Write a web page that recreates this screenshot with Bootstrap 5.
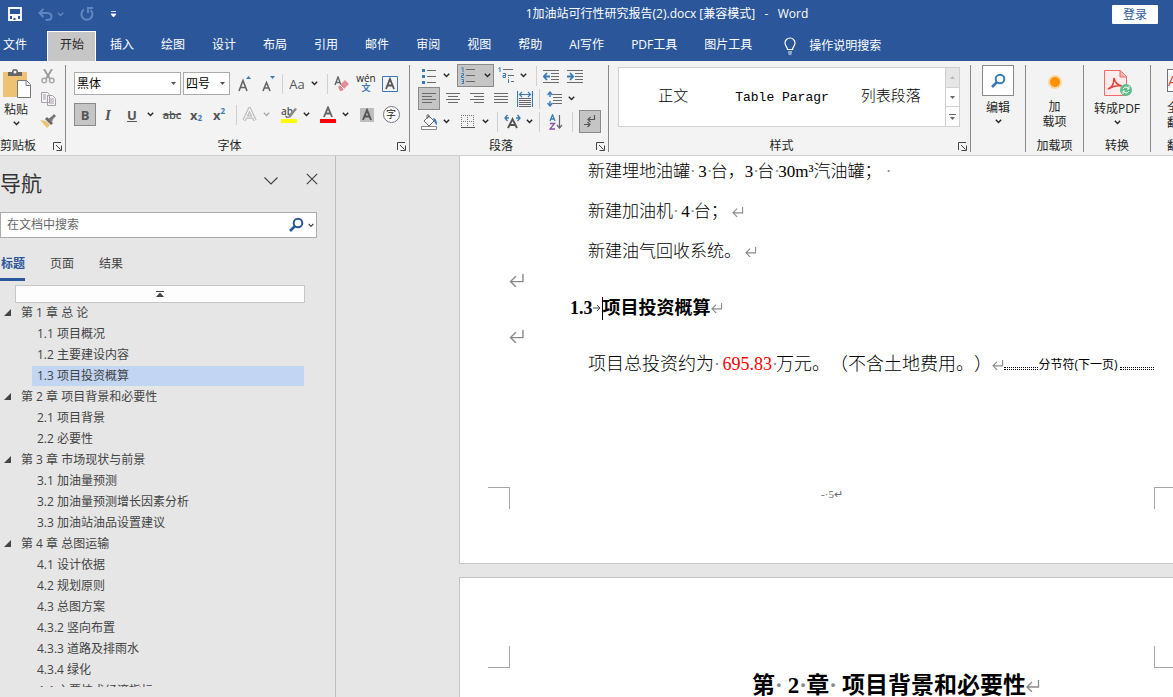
<!DOCTYPE html>
<html lang="zh-CN">
<head>
<meta charset="utf-8">
<meta name="viewport" content="width=device-width, initial-scale=1">
<title>1加油站可行性研究报告(2).docx - Word</title>
<link href="https://cdn.jsdelivr.net/npm/bootstrap@5.3.0/dist/css/bootstrap.min.css" rel="stylesheet">
<script src="https://cdn.jsdelivr.net/npm/bootstrap@5.3.0/dist/js/bootstrap.bundle.min.js"></script>
<style>
:root{--blue:#2b579a;--line:#c6c6c6;--ink:#262626;--ico:#6a6a6a;--accent:#3c7ab5}
body{font:12px/18px "Open Sans","Noto Sans CJK SC",sans-serif;color:var(--ink);background:#e6e6e6}
button{font:inherit;color:inherit;background:none;border:0;padding:0}
a{color:inherit;text-decoration:none}
svg{display:block;flex:none}
.titlebar{display:grid;grid-template-columns:1fr auto 1fr;height:28px;padding-right:15px;align-items:center}
.titlebar .doc-name{padding-left:176px;white-space:pre}
.app-head{background:var(--blue);color:#fff}
.login{background:#fff;color:var(--blue);width:46px;height:19px;line-height:17px;border-radius:1px}
.quick{gap:16px;padding-left:8px}
.quick .dim{color:#5f86c0}
.tabs{height:33px;padding-top:3px;gap:1px}
.tabs a{padding:0 13px;line-height:28px;height:30px;white-space:nowrap}
.tabs a.file{padding-left:3px;margin-right:6px}
.tabs a.on{background:#c6c6c6;color:var(--ink);border:1px solid #fff;border-bottom:0;padding:0 11px 0 12px;line-height:26px}
.tabs a.tell{gap:11px}
.ribbon{background:#f3f3f3;border-bottom:1px solid #d0d0d0;height:95px;padding:4px 0 3px}
.group{position:relative;flex:none;border-right:1px solid #8a8a8a;display:flex;flex-direction:column}
.group-label{margin-top:auto;line-height:13px;text-align:center;white-space:nowrap}
.launcher{position:absolute;right:3px;bottom:1px}
.tools{display:grid;height:23px;align-items:center;justify-items:center}
.tools button{display:flex;align-items:center;justify-content:center;width:100%;height:100%}
.tools .on{background:#c5c5c5;border:1px solid #8a8a8a}
.sep{width:1px;height:20px;background:#d0d0d0}
.ribbon .form-select{font-size:12px;line-height:18px;border:1px solid #ababab;border-radius:0;padding:0 12px 0 2px;height:23px;color:#000;background:#fff url("data:image/svg+xml,%3Csvg xmlns='http://www.w3.org/2000/svg' width='7' height='4'%3E%3Cpath d='M1 0h5L3.500 3z' fill='%23555'/%3E%3C/svg%3E") no-repeat right 3px center;background-size:7px 4px}
.clip{width:66px}
.fnt{width:344px;padding:7px 0 0 8px}
.font-a{grid-template-columns:107px 2px 47px 2px 24px 24px 5px 24px 10px 6px 5px 24px 24px 24px}
.font-b{grid-template-columns:22px 24px 24px 12px 32px 16px 30px 4px 22px 12px 5px 24px 10px 5px 24px 10px 5px 24px 24px;margin-top:8px}
.para{width:199px;padding-left:8px}
.para-a{grid-template-columns:23px 10px 6px 37px 24px 10px 6px 5px 24px 24px;margin-top:-1px}
.para-b{grid-template-columns:22px 25px 24px 24px 24px 5px 24px 10px}
.para-c{grid-template-columns:23px 10px 5px 24px 10px 5px 5px 24px 10px 10px 24px 8px 3px 22px}
.glyph{font-weight:700;font-size:13px;color:#555;line-height:20px}
.glyph em{font:italic 700 15px/20px "Liberation Serif",serif}
.glyph s{font-size:11px;font-weight:600}
.glyph small{font-size:8px;line-height:8px;color:#3c7ab5}
.pinyin span{font-size:10px;line-height:9px}
.pinyin b{font-size:9px;line-height:10px;color:#3c7ab5}
.ringed{width:17px;height:17px;font-size:10px;line-height:14px}
.gallery{margin:2px 10px 0 9px;height:60px;border:1px solid #d0d0d0;background:#fff;font:15px/20px "Liberation Mono","Noto Sans CJK SC",monospace;color:#000;font-weight:300}
.gallery .sample{flex:1 1 0;white-space:nowrap;padding-top:2px}
.gallery .latin{font-size:13px}
.gallery .scroller{width:14px;border-left:1px solid #d0d0d0}
.scroller button{flex:1;display:flex;align-items:center;justify-content:center;border-bottom:1px solid #d0d0d0}
.scroller button:first-child{background:#e6e6e6}
.scroller button:last-child{border:0}
.big{display:flex;flex-direction:column;align-items:center;white-space:nowrap;line-height:15px}
.lens{width:32px;height:31px;border:1px solid #8a8a8a;background:#fff;margin-bottom:4px;color:#3c7ab5}
.trans{color:#e5443f;height:23px;line-height:20px;font-size:15px}
.pane{width:336px;flex:none;border-right:1px solid #bdbdbd;color:#444;padding-bottom:10px}
.pane h1{font-size:21px;line-height:28px;margin:0;color:#333;font-weight:400}
.pane-head{padding:13px 17px 0 0;height:56px}
.searchbox{width:317px;height:26px;background:#fff;border:1px solid #ababab;padding-right:2px}
.searchbox input{font-size:12px;border:0;padding:0 6px 2px;height:24px;background:none;box-shadow:none}
.searchbox input::placeholder{color:#666}
.views{gap:25px;padding-top:16px}
.views a{line-height:20px;padding-bottom:4px;border-bottom:3px solid transparent}
.views a.on{color:var(--blue);font-weight:700;border-color:var(--blue);padding-left:1px}
.collapse-bar{margin:4px 30px 0 15px;height:18px;background:#fdfdfd;border:1px solid var(--line);flex:none}
.outline{list-style:none;margin:0 31px 0 0;padding:0;flex:1 1 0;overflow:hidden;white-space:nowrap}
.outline li{display:flex;align-items:flex-start;height:21px;padding-left:4px}
.outline a{line-height:19px;height:20px}
.outline li button{width:17px;padding-top:6px}
.outline .sub{padding-left:32px}
.outline .sub a{padding-left:5px;flex:1}
.outline .sub a.on{background:#c2d5f2}
.desk{flex:1;min-width:0;overflow:hidden;padding-left:123px;gap:13px}
.sheet{background:#fff;border:1px solid var(--line);border-right:0;border-top:0;flex:none;color:#000;font:17px/29px "Liberation Serif","Noto Sans CJK SC",serif;font-weight:300;white-space:nowrap;padding-top:1px;text-spacing-trim:space-all}
.sheet.next{border-top:1px solid var(--line);padding-top:68px}
.sheet p{margin:0 0 11px;padding:0 19px 0 128px;display:flex;align-items:center}
.sheet p.tight{margin:0}
.sheet p.total{font-size:18px}
.sheet i{font-style:normal;color:#8a8a8a;width:4px;text-align:center}
.sheet .alone{height:28px;padding-left:49px;display:flex;align-items:center}
.sheet h2{font-size:18px;line-height:28px;font-weight:700;margin:0;padding-left:110px;display:flex;align-items:center}
.sheet h3{font-size:23px;line-height:36px;font-weight:700;margin:0;padding-left:292px;display:flex;align-items:center}
.sheet h3 i{width:7px}
.caret{width:1px;height:23px;background:#000}
.brk{flex:1;height:3px;border:dotted #000;border-width:1px 0}
.brk-name{font:12px/20px "Open Sans","Noto Sans CJK SC",sans-serif;padding-right:2px}
.crop{--bs-border-color:#a6a6a6;width:22px;height:22px}
.crop.edge{width:19px}
.crops{padding-left:28px}
.crops.foot{margin-top:108px;padding-bottom:54px}
.folio{font-size:11px;line-height:14px;color:#666}
</style>
</head>
<body class="vh-100 overflow-hidden d-flex flex-column">
<svg width="0" height="0" class="position-absolute" aria-hidden="true">
<symbol id="chev" viewBox="0 0 7 5"><path d="M.8.8 3.500 3.500 6.200.8" fill="none" stroke="currentColor" stroke-width="1.400"/></symbol>
<symbol id="launch" viewBox="0 0 9 9"><path d="M.5 8V.5H8M3 3l4.500 4.500M8.500 3.500v5h-5" fill="none" stroke="#444"/></symbol>
<symbol id="ret" viewBox="0 0 14 12"><path d="M12.500 0v7H1.500M6 2 1 7l5 5" fill="none" stroke="#8a8a8a" stroke-width="1.300"/></symbol>
<symbol id="lensicon" viewBox="0 0 16 16"><circle cx="10" cy="6" r="4.300" fill="none" stroke="currentColor" stroke-width="2"/><path d="M7 9 2 14" stroke="currentColor" stroke-width="2.600"/></symbol>
</svg>

<header class="app-head flex-shrink-0">
<div class="titlebar">
  <div class="quick d-flex align-items-center">
    <button aria-label="保存"><svg width="14" height="14" viewBox="0 0 14 14"><path d="M1 1h12v12H1zM1 8h12" fill="none" stroke="#fff" stroke-width="1.800"/><path d="M4 9h6v5H4z" fill="#fff"/><path d="M5.500 11h2v2h-2z" fill="#2b579a"/></svg></button>
    <button class="dim d-flex align-items-center gap-1" aria-label="撤消"><svg width="15" height="13" viewBox="0 0 15 13"><path d="M5.500 1 1.500 5l4 4M2 5h7q4.500 0 4.500 3.500T9 12H7.500" fill="none" stroke="currentColor" stroke-width="2"/></svg><svg width="7" height="5"><use href="#chev"/></svg></button>
    <button class="dim" aria-label="恢复"><svg width="14" height="14" viewBox="0 0 14 14"><path d="M4 2.500A5.500 5.500 0 1 0 10.500 3M8 6V1h5" fill="none" stroke="currentColor" stroke-width="2"/></svg></button>
    <button aria-label="自定义快速访问工具栏"><svg width="7" height="7"><path d="M1 .5h5M1 3h5L3.500 6z" fill="#fff" stroke="#fff" stroke-width=".8"/></svg></button>
  </div>
  <div class="doc-name">1加油站可行性研究报告(2).docx [兼容模式]   -   Word</div>
  <button class="login ms-auto">登录</button>
</div>
<nav class="tabs d-flex">
  <a class="file" href="#">文件</a><a class="on" href="#">开始</a><a href="#">插入</a><a href="#">绘图</a><a href="#">设计</a><a href="#">布局</a><a href="#">引用</a><a href="#">邮件</a><a href="#">审阅</a><a href="#">视图</a><a href="#">帮助</a><a href="#">AI写作</a><a href="#">PDF工具</a><a href="#">图片工具</a>
  <a class="tell d-flex align-items-center ps-3" href="#"><svg width="16" height="18" viewBox="0 0 16 18"><path d="M5.500 12.500C5.500 10 3 9 3 6a5 5 0 0 1 10 0c0 3-2.500 4-2.500 6.500zM6 15h4M6.500 17h3" fill="none" stroke="#fff" stroke-width="1.200"/></svg>操作说明搜索</a>
</nav>
</header>

<div class="ribbon d-flex flex-shrink-0 overflow-hidden">
  <section class="group clip">
    <div class="d-flex">
      <button class="big"><svg width="32" height="33" viewBox="0 0 32 33"><path d="M3 7h24v25H3z" fill="#eec274"/><path d="M8 11V7h4q0-3 3-3t3 3h4v4z" fill="#666"/><circle cx="15" cy="7" r="1.500" fill="#f3f3f3"/><path d="M17.500 15.500h9l4 4v13h-13z" fill="#fff" stroke="#777"/><path d="M26 15.500v5h5" fill="none" stroke="#777"/></svg><span class="pt-1">粘贴</span><svg width="7" height="5" class="mt-1"><use href="#chev"/></svg></button>
      <div class="d-flex flex-column align-items-center ps-2 pt-1 gap-2">
        <button aria-label="剪切"><svg width="14" height="15" viewBox="0 0 14 15"><path d="M3 0l6 10M11 0 5 10" stroke="#999" stroke-width="1.800"/><circle cx="3.200" cy="11.500" r="2.300" fill="none" stroke="#aaa" stroke-width="1.500"/><circle cx="10.800" cy="11.500" r="2.300" fill="none" stroke="#aaa" stroke-width="1.500"/></svg></button>
        <button aria-label="复制"><svg width="15" height="14" viewBox="0 0 15 14"><path d="M.5.500h6l2 2v8h-8zM6.500 3.500h5l3 3v7h-8z" fill="#f3f3f3" stroke="#a89fad"/><path d="M2 3h3M2 5h3M2 7h3M8 7h5M8 9h5M8 11h5" stroke="#a89fad"/></svg></button>
        <button aria-label="格式刷"><svg width="16" height="14" viewBox="0 0 16 14"><path d="M0 6l6 1 4 4-3 3z" fill="#eec274"/><path d="M5 5l2-2 6 6-2 2z" fill="#666"/><path d="M8 5l3-2 3-3 2 2-3 3-1 3z" fill="#777"/></svg></button>
      </div>
    </div>
    <div class="group-label text-start">剪贴板</div><button class="launcher" aria-label="剪贴板选项"><svg width="9" height="9"><use href="#launch"/></svg></button>
  </section>

  <section class="group fnt">
    <div class="tools font-a">
      <select class="form-select" aria-label="字体"><option>黑体</option></select><span></span>
      <select class="form-select" aria-label="字号"><option>四号</option></select><span></span>
      <button aria-label="增大字号"><svg width="15" height="18" viewBox="0 0 15 18"><path d="M2 16 6 5.500 10 16M3.500 12.500h5" fill="none" stroke="#666" stroke-width="1.600"/><path d="M9 4l2.500-3L14 4z" fill="#3c7ab5"/></svg></button>
      <button aria-label="减小字号"><svg width="15" height="18" viewBox="0 0 15 18"><path d="M2 16 5.500 7.500 9 16M3 13h5" fill="none" stroke="#666" stroke-width="1.600"/><path d="M9 1h5l-2.500 3z" fill="#3c7ab5"/></svg></button>
      <span class="sep"></span><button class="glyph fw-normal">Aa</button><svg width="7" height="5"><use href="#chev"/></svg><span></span><span class="sep"></span>
      <button aria-label="清除格式"><svg width="16" height="16" viewBox="0 0 16 16"><path d="M1 9 4 1l3 8M2 6.500h4" fill="none" stroke="#666" stroke-width="1.400"/><path d="M4 11 11 4l4 4-7 7H6z" fill="#e88b97"/><path d="M6 9l4 4" stroke="#fff"/></svg></button>
      <button aria-label="拼音指南" class="pinyin flex-column"><span>wén</span><b>文</b></button>
      <button aria-label="字符边框"><svg width="16" height="16" viewBox="0 0 16 16"><path d="M.5.500h15v15H.5z" fill="none" stroke="#3c7ab5"/><path d="M4 13 8 3l4 10M5.500 9.500h5" fill="none" stroke="#555" stroke-width="1.800"/></svg></button>
    </div>
    <div class="tools font-b">
      <button class="glyph on" aria-label="加粗">B</button>
      <button class="glyph" aria-label="倾斜"><em>I</em></button>
      <button class="glyph" aria-label="下划线"><u>U</u></button><svg width="7" height="5"><use href="#chev"/></svg>
      <button class="glyph" aria-label="删除线"><s>abc</s></button>
      <button aria-label="下标" class="glyph">x<small class="align-self-end pb-1">2</small></button>
      <button aria-label="上标" class="glyph">x<small class="align-self-start pt-1">2</small></button>
      <span class="sep"></span>
      <button aria-label="文本效果"><svg width="15" height="15" viewBox="0 0 15 15"><path d="M2 13.500 7.500 2 13 13.500M4 10h7" fill="none" stroke="#bbb" stroke-width="3.600"/><path d="M2 13.500 7.500 2 13 13.500M4 10h7" fill="none" stroke="#f6f6f6" stroke-width="1.200"/></svg></button>
      <svg width="7" height="5" color="#aaa"><use href="#chev"/></svg><span></span>
      <button aria-label="突出显示"><svg width="17" height="17" viewBox="0 0 17 17"><text x="0" y="9" font-size="10" font-weight="600" fill="#555">ab</text><path d="M7 10 14 2l2 1-7 9z" fill="#888"/><path d="M4 9l5 3H5z" fill="#777"/><path d="M0 13h16v4H0z" fill="#ff0"/></svg></button>
      <svg width="7" height="5"><use href="#chev"/></svg><span></span>
      <button aria-label="字体颜色"><svg width="16" height="17" viewBox="0 0 16 17"><path d="M4 11 8 1.500 12 11M5.500 7.500h5" fill="none" stroke="#666" stroke-width="1.900"/><path d="M0 13h16v4H0z" fill="red"/></svg></button>
      <svg width="7" height="5"><use href="#chev"/></svg><span></span>
      <button aria-label="字符底纹"><svg width="14" height="14" viewBox="0 0 14 14"><path d="M0 0h14v14H0z" fill="#bdbdbd"/><path d="M3 12 7 2l4 10M4.500 8.500h5" fill="none" stroke="#555" stroke-width="1.900"/></svg></button>
      <button aria-label="带圈字符"><span class="ringed rounded-circle border border-secondary bg-white">字</span></button>
    </div>
    <div class="group-label pe-4">字体</div><button class="launcher" aria-label="字体选项"><svg width="9" height="9"><use href="#launch"/></svg></button>
  </section>

  <section class="group para">
    <div class="tools para-a">
      <button aria-label="项目符号"><svg width="15" height="16" viewBox="0 0 15 16"><path d="M5 2.500h9M5 8.500h9M5 14.500h9" stroke="#6a6a6a"/><path d="M0 1h3v3H0zM0 7h3v3H0zM0 13h3v3H0z" fill="#3c7ab5"/></svg></button>
      <svg width="7" height="5"><use href="#chev"/></svg><span></span>
      <button class="on gap-2" aria-label="编号"><svg width="15" height="17" viewBox="0 0 15 17"><path d="M5 2.500h9M5 8.500h9M5 14.500h9" stroke="#6a6a6a"/><path d="M.5 1.500 2 .5V5M.5 6.500h2v2h-2v2h2.500M.5 12.500h2v4h-2M1 14.500h1.500" fill="none" stroke="#3c7ab5"/></svg><svg width="7" height="5"><use href="#chev"/></svg></button>
      <button aria-label="多级列表"><svg width="16" height="17" viewBox="0 0 16 17"><path d="M5 2.500h10M10 8.500h6M13 14.500h3" stroke="#6a6a6a"/><path d="M.5 1.500 2 .5V5M5 6.500h2.500v4H5v-2h2.500M10.500 12v4M10.500 10v1" fill="none" stroke="#3c7ab5"/></svg></button>
      <svg width="7" height="5"><use href="#chev"/></svg><span></span><span class="sep"></span>
      <button aria-label="减少缩进"><svg width="16" height="14" viewBox="0 0 16 14"><path d="M0 1.500h16M8 4.500h8M8 7.500h8M8 10.500h8M0 13.500h16" stroke="#6a6a6a"/><path d="M7 7.500H1M4 4 .8 7.500 4 11" fill="none" stroke="#3c7ab5" stroke-width="1.800"/></svg></button>
      <button aria-label="增加缩进"><svg width="16" height="14" viewBox="0 0 16 14"><path d="M0 1.500h16M8 4.500h8M8 7.500h8M8 10.500h8M0 13.500h16" stroke="#6a6a6a"/><path d="M0 7.500h6M3 4l3.200 3.500L3 11" fill="none" stroke="#3c7ab5" stroke-width="1.800"/></svg></button>
    </div>
    <div class="tools para-b">
      <button class="on" aria-label="左对齐"><svg width="14" height="11"><path d="M0 .5h14M0 3.500h10M0 6.500h14M0 9.500h10" stroke="#6a6a6a"/></svg></button>
      <button aria-label="居中"><svg width="14" height="11"><path d="M0 .5h14M2 3.500h10M0 6.500h14M2 9.500h10" stroke="#6a6a6a"/></svg></button>
      <button aria-label="右对齐"><svg width="14" height="11"><path d="M0 .5h14M4 3.500h10M0 6.500h14M4 9.500h10" stroke="#6a6a6a"/></svg></button>
      <button aria-label="两端对齐"><svg width="14" height="11"><path d="M0 .5h14M0 3.500h14M0 6.500h14M0 9.500h14" stroke="#6a6a6a"/></svg></button>
      <button aria-label="分散对齐"><svg width="16" height="16" viewBox="0 0 16 16"><path d="M.5 0v16M15.500 0v16M3 3.500h10M5 1 2.500 3.500 5 6M11 1l2.500 2.500L11 6" fill="none" stroke="#3c7ab5" stroke-width="1.200"/><path d="M2 7.500h12M2 9.500h12M2 11.500h12M2 13.500h12M2 15.500h12" stroke="#666"/></svg></button>
      <span class="sep"></span>
      <button aria-label="行距"><svg width="15" height="16" viewBox="0 0 15 16"><path d="M6 3.500h9M6 6.500h9M6 9.500h9M6 12.500h9" stroke="#6a6a6a"/><path d="M3 1v5M3 10v5M.5 4 3 1l2.500 3M.5 12 3 15l2.500-3" fill="none" stroke="#3c7ab5" stroke-width="1.400"/></svg></button>
      <svg width="7" height="5"><use href="#chev"/></svg>
    </div>
    <div class="tools para-c">
      <button aria-label="底纹"><svg width="17" height="16" viewBox="0 0 17 16"><path d="M3 7 8 2l5 5-5 5zM6 5V1h2v3" fill="#fff" stroke="#666"/><path d="M12 4q4 0 4 7-2-1-3-4z" fill="#3c7ab5"/><path d="M.5 12.500h15v3H.5z" fill="#fff" stroke="#888"/></svg></button>
      <svg width="7" height="5"><use href="#chev"/></svg><span></span>
      <button aria-label="边框"><svg width="14" height="14"><path d="M0 .5h14M0 6.500h14M.5 0v14M6.500 0v14M12.500 0v14" stroke="#777" stroke-dasharray="1 1"/><path d="M0 12.500h14" stroke="#555"/></svg></button>
      <svg width="7" height="5"><use href="#chev"/></svg><span></span><span class="sep"></span>
      <button aria-label="中文版式"><svg width="17" height="15" viewBox="0 0 17 15"><path d="M4 14 8.500 5 13 14M6 11h5" fill="none" stroke="#555" stroke-width="1.900"/><path d="M1 4h4M3.500 1 1 4l2.500 3M12 4h4M13.500 1 16 4l-2.500 3" fill="none" stroke="#3c7ab5" stroke-width="1.400"/></svg></button>
      <svg width="7" height="5"><use href="#chev"/></svg><span class="sep"></span>
      <button aria-label="排序"><svg width="14" height="16" viewBox="0 0 14 16"><path d="M1 7 3.500.8 6 7M2 5h3" fill="none" stroke="#3c7ab5" stroke-width="1.300"/><path d="M1 9.500h4.500L1 15h5" fill="none" stroke="#8a53a8" stroke-width="1.300"/><path d="M10.500 1v13M8 11l2.500 3 2.500-3" fill="none" stroke="#666" stroke-width="1.200"/></svg></button>
      <span class="sep"></span><span></span>
      <button class="on" aria-label="显示编辑标记"><svg width="12" height="13" viewBox="0 0 12 13"><path d="M10.500 0v4.500H4M6.500 2 4 4.500 6.500 7M0 9.500h6M3.500 7 6 9.500 3.500 12" fill="none" stroke="#555" stroke-width="1.200"/></svg></button>
    </div>
    <div class="group-label pe-4">段落</div><button class="launcher" aria-label="段落选项"><svg width="9" height="9"><use href="#launch"/></svg></button>
  </section>

  <section class="group flex-grow-1 flex-shrink-1">
    <div class="gallery d-flex">
      <div class="d-flex flex-grow-1 align-items-center"><button class="sample">正文</button><button class="sample latin">Table Paragr</button><button class="sample">列表段落</button></div>
      <div class="scroller d-flex flex-column">
        <button aria-label="上一行"><svg width="5" height="3"><path d="M0 3h5L2.500 0z" fill="#bbb"/></svg></button>
        <button aria-label="下一行"><svg width="5" height="3"><path d="M0 0h5L2.500 3z" fill="#666"/></svg></button>
        <button aria-label="其他"><svg width="7" height="6"><path d="M0 .5h7" stroke="#666"/><path d="M1 3h5L3.500 6z" fill="#666"/></svg></button>
      </div>
    </div>
    <div class="group-label pe-3">样式</div><button class="launcher" aria-label="样式选项"><svg width="9" height="9"><use href="#launch"/></svg></button>
  </section>

  <section class="group" style="width:55px"><button class="big"><span class="lens d-flex align-items-center justify-content-center"><svg width="16" height="16"><use href="#lensicon"/></svg></span>编辑<svg width="7" height="5" class="mt-1"><use href="#chev"/></svg></button></section>
  <section class="group" style="width:58px"><button class="big pt-2"><svg width="18" height="18" class="mb-2"><circle cx="9" cy="9" r="7" fill="#fbd7a0"/><circle cx="9" cy="9" r="5" fill="#ff9100"/></svg><span>加<br>载项</span></button><div class="group-label">加载项</div></section>
  <section class="group" style="width:67px"><button class="big pt-1"><svg width="29" height="28" viewBox="0 0 29 28"><path d="M1.500 1.500h16l6 6v19h-22z" fill="#fdeceb" stroke="#ee6b68"/><path d="M17 1.500V8h6" fill="#f7b5b2" stroke="#ee6b68"/><path d="M5 20c5-2 6-6 6-11 1 5 3 7 8 8-5-1-9 0-14 3z" fill="none" stroke="#e5443f" stroke-width="1.600"/><circle cx="23" cy="21" r="6" fill="#5fbf8c"/><path d="M20 20q3-4 6 0M26 22q-3 4-6 0M26 17v3h-2M20 25v-3h2" fill="none" stroke="#fff"/></svg><span class="pt-1">转成PDF</span><svg width="7" height="5" class="mt-1"><use href="#chev"/></svg></button><div class="group-label">转换</div></section>
  <section class="group overflow-hidden border-0 ps-3" style="width:22px"><button class="big align-items-start pt-1"><span class="trans bg-white border border-secondary mb-2">A文</span><span>全文<br>翻译</span></button><div class="group-label text-start">翻译</div></section>
</div>

<main class="d-flex flex-grow-1" style="min-height:0">
  <aside class="pane d-flex flex-column">
    <div class="pane-head d-flex align-items-start flex-shrink-0">
      <h1>导航</h1>
      <button class="ms-auto pt-2" aria-label="任务窗格选项"><svg width="14" height="8"><path d="M.5.500 7 7 13.500.5" fill="none" stroke="#444" stroke-width="1.200"/></svg></button>
      <button class="ms-4 ps-1 pt-1" aria-label="关闭"><svg width="12" height="12"><path d="M.8.8l10.400 10.400M11.200.8.800 11.200" stroke="#444" stroke-width="1.200"/></svg></button>
    </div>
    <div class="searchbox d-flex align-items-center flex-shrink-0"><input class="form-control" type="text" placeholder="在文档中搜索" aria-label="在文档中搜索"><button class="d-flex align-items-center gap-1" aria-label="搜索"><svg width="16" height="16" color="#2b579a"><use href="#lensicon"/></svg><svg width="6" height="5"><use href="#chev"/></svg></button></div>
    <nav class="views d-flex flex-shrink-0"><a class="on" href="#">标题</a><a href="#">页面</a><a href="#">结果</a></nav>
    <button class="collapse-bar d-flex align-items-center justify-content-center" aria-label="跳转到开头"><svg width="8" height="6"><path d="M0 .5h8" stroke="#444"/><path d="M0 6h8L4 1.500z" fill="#444"/></svg></button>
    <ul class="outline">
      <li><button aria-label="折叠"><svg width="7" height="7"><path d="M7 0v7H0z" fill="#444"/></svg></button><a href="#">第 1 章 总 论</a></li>
      <li class="sub"><a href="#">1.1 项目概况</a></li>
      <li class="sub"><a href="#">1.2 主要建设内容</a></li>
      <li class="sub"><a class="on" href="#">1.3 项目投资概算</a></li>
      <li><button aria-label="折叠"><svg width="7" height="7"><path d="M7 0v7H0z" fill="#444"/></svg></button><a href="#">第 2 章 项目背景和必要性</a></li>
      <li class="sub"><a href="#">2.1 项目背景</a></li>
      <li class="sub"><a href="#">2.2 必要性</a></li>
      <li><button aria-label="折叠"><svg width="7" height="7"><path d="M7 0v7H0z" fill="#444"/></svg></button><a href="#">第 3 章 市场现状与前景</a></li>
      <li class="sub"><a href="#">3.1 加油量预测</a></li>
      <li class="sub"><a href="#">3.2 加油量预测增长因素分析</a></li>
      <li class="sub"><a href="#">3.3 加油站油品设置建议</a></li>
      <li><button aria-label="折叠"><svg width="7" height="7"><path d="M7 0v7H0z" fill="#444"/></svg></button><a href="#">第 4 章 总图运输</a></li>
      <li class="sub"><a href="#">4.1 设计依据</a></li>
      <li class="sub"><a href="#">4.2 规划原则</a></li>
      <li class="sub"><a href="#">4.3 总图方案</a></li>
      <li class="sub"><a href="#">4.3.2 竖向布置</a></li>
      <li class="sub"><a href="#">4.3.3 道路及排雨水</a></li>
      <li class="sub"><a href="#">4.3.4 绿化</a></li>
      <li class="sub"><a href="#">4.4 主要技术经济指标</a></li>
    </ul>
  </aside>

  <div class="desk d-flex flex-column">
    <article class="sheet">
      <p>新建埋地油罐<i>·</i>&nbsp;3<i>·</i>台，3<i>·</i>台<i>·</i>30m³汽油罐；&nbsp;<i>·</i></p>
      <p>新建加油机<i>·</i>&nbsp;4<i>·</i>台；<svg class="ms-1" width="12" height="10"><use href="#ret"/></svg></p>
      <p class="tight">新建油气回收系统。<svg class="ms-1" width="12" height="10"><use href="#ret"/></svg></p>
      <div class="alone"><svg width="16" height="13"><use href="#ret"/></svg></div>
      <h2>1.3<svg width="9" height="8"><path d="M0 4h7M4 1l3 3-3 3" fill="none" stroke="#444"/></svg><span class="caret"></span>项目投资概算<svg width="12" height="10"><use href="#ret"/></svg></h2>
      <div class="alone"><svg width="16" height="13"><use href="#ret"/></svg></div>
      <p class="tight total">项目总投资约为<i>·</i>&nbsp;<span class="mark-red" style="color:red">695.83</span><i>·</i>万元。（不含土地费用。）<svg width="12" height="10"><use href="#ret"/></svg><span class="brk mt-2"></span><span class="brk-name">分节符(下一页)</span><span class="brk mt-2"></span></p>
      <div class="crops foot d-flex justify-content-between align-items-start">
        <span class="crop border-top border-end"></span>
        <span class="folio">-·5↵</span>
        <span class="crop edge border-top border-start"></span>
      </div>
    </article>
    <article class="sheet next">
      <div class="crops d-flex justify-content-between">
        <span class="crop border-bottom border-end"></span>
        <span class="crop edge border-bottom border-start"></span>
      </div>
      <h3>第<i>·</i>&nbsp;2<i>·</i>章<i>·</i>&nbsp;项目背景和必要性<svg width="14" height="12"><use href="#ret"/></svg></h3>
    </article>
  </div>
</main>
</body>
</html>
